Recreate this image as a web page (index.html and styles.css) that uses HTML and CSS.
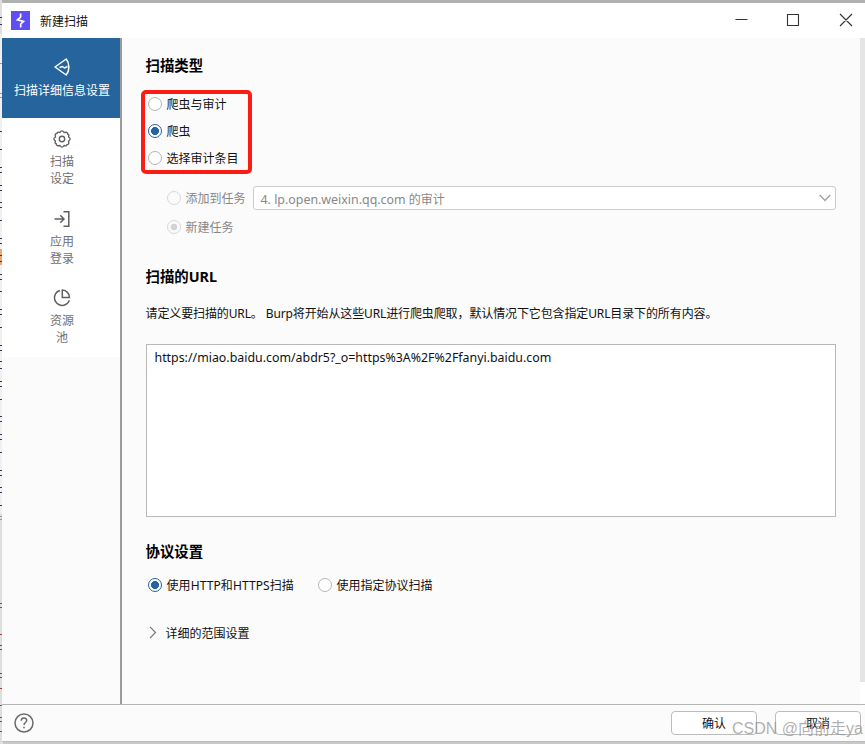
FILE: index.html
```html
<!DOCTYPE html>
<html lang="zh-CN">
<head>
<meta charset="utf-8">
<title>新建扫描</title>
<link rel="stylesheet" href="styles.css">
</head>
<body>
<div class="desktop">
  <svg class="edge" width="3" height="744" viewBox="0 0 3 744" aria-hidden="true">
    <path fill="#dedede" d="M0 0h3v744H0z"/>
    <path fill="#f0f0f0" d="M0 34h2v480H0z"/>
    <path fill="#eda877" d="M0 249h3v16H0z"/>
    <path stroke="#999" d="M0 63.5h3M0 93.5h3M0 97.5h3M0 516.5h3M0 519.5h3"/>
    <path stroke="#283b5c" d="M0 17.5h2M0 24.5h2M0 131.5h3M0 149.5h3M0 167.5h3M0 172.5h3M0 185.5h3M0 190.5h3M0 202.5h3M0 207.5h3M0 220.5h3M0 238.5h3M0 243.5h3M0 255.5h2M0 261.5h2M0 274.5h3M0 279.5h3M0 291.5h3M0 309.5h3M0 314.5h3M0 327.5h3M0 345.5h3M0 350.5h3M0 361.5h3M0 368.5h3M0 381.5h3M0 386.5h3M0 399.5h3M0 416.5h3M0 421.5h3M0 434.5h3M0 439.5h3M0 452.5h3M0 470.5h3M0 475.5h3M0 487.5h3M0 492.5h3M0 505.5h3"/>
    <path stroke="#b33a3a" d="M0 603.5h2M0 607.5h2M0 634.5h2M0 688.5h2M0 705.5h2M0 717.5h2M0 721.5h2M0 731.5h2"/>
    <path stroke="#4747b8" d="M0 645.5h2M0 649.5h2M0 673.5h2M0 677.5h2"/>
  </svg>
  <div class="window">
    <header class="titlebar">
      <svg class="logo" width="19" height="19" viewBox="0 0 19 19"><path fill="#5f4df5" d="M0 0h19v19H0z"/><path fill="none" stroke="#fff" stroke-width="1.700" d="M9.600 2.500V6.200L6.500 8.800 12.500 10.400 9.700 13V16.500"/></svg>
      <span class="title">新建扫描</span>
      <svg class="controls" width="118" height="14" viewBox="0 0 118 14" fill="none" stroke="#333" stroke-width="1.1"><path d="M.5 6.500h12M52.500 1.500h11v11h-11zM105 1l12 12M117 1l-12 12"/></svg>
    </header>
    <div class="body">
      <nav class="sidebar">
        <div class="tab active">
          <svg width="18" height="20" viewBox="0 0 18 20" fill="none" stroke="#fff" stroke-width="1.5" stroke-linejoin="round"><path d="M2 10 13.200 2C16.800 6.500 16.800 13.500 13.200 18z"/><path d="M6.500 10.500 9.500 9.500 11.500 11 14.500 9.500"/></svg>
          <span>扫描详细信息设置</span>
        </div>
        <div class="tab">
          <svg width="18" height="18" viewBox="0 0 18 18" fill="none" stroke="#606060" stroke-width="1.4" stroke-linejoin="round"><circle cx="9" cy="9" r="2.700"/><path d="M7 2.500Q9-.8 11 2.500Q14.600 1.400 14.800 4.200Q16.600 4.500 15.500 7Q18.800 9 15.500 11Q16.600 14.600 13.800 14.800Q13.500 16.600 11 15.500Q9 18.800 7 15.500Q3.400 16.600 3.200 13.800Q1.400 13.500 2.500 11Q-.8 9 2.500 7Q1.400 3.400 4.200 3.200Q4.500 1.400 7 2.500Z"/></svg>
          <span>扫描<br>设定</span>
        </div>
        <div class="tab">
          <svg width="18" height="18" viewBox="0 0 18 18" fill="none" stroke="#606060" stroke-width="1.5"><path d="M1.500 9h9.500M7.300 5.200 11 9l-3.700 3.800M10.500 1.700h5.300v14.600h-5.300"/></svg>
          <span>应用<br>登录</span>
        </div>
        <div class="tab">
          <svg width="18" height="18" viewBox="0 0 18 18" fill="none" stroke="#606060" stroke-width="1.500"><path d="M7 1.500A7.600 7.600 0 1 0 16.300 11.300M9.300 1.100V8.600h7.200A7.400 7.400 0 0 0 9.300 1.100z"/></svg>
          <span>资源<br>池</span>
        </div>
      </nav>
      <main class="content">
        <h2>扫描类型</h2>
        <div class="scan-types">
          <div class="option"><i class="radio"></i><span>爬虫与审计</span></div>
          <div class="option"><i class="radio on"></i><span>爬虫</span></div>
          <div class="option"><i class="radio"></i><span>选择审计条目</span></div>
        </div>
        <div class="task disabled">
          <i class="radio"></i><span>添加到任务</span>
          <div class="select"><span><span class="host">4. lp.open.weixin.qq.com</span> 的审计</span>
            <svg width="12" height="8" viewBox="0 0 12 8" fill="none" stroke="#a2a2a2" stroke-width="1.300"><path d="M.7 1 6 6.500 11.300 1"/></svg>
          </div>
        </div>
        <div class="task disabled"><i class="radio on"></i><span>新建任务</span></div>
        <h2 class="url-heading">扫描的URL</h2>
        <p class="hint">请定义要扫描的URL。 Burp将开始从这些URL进行爬虫爬取，默认情况下它包含指定URL目录下的所有内容。</p>
        <div class="urls"><span>https://miao.baidu.com/abdr5?_o=https%3A%2F%2Ffanyi.baidu.com</span></div>
        <h2 class="protocol-heading">协议设置</h2>
        <div class="protocols">
          <div class="option first"><i class="radio on"></i><span>使用HTTP和HTTPS扫描</span></div>
          <div class="option"><i class="radio"></i><span>使用指定协议扫描</span></div>
        </div>
        <div class="details"><svg width="8" height="13" viewBox="0 0 8 13" fill="none" stroke="#777" stroke-width="1.200"><path d="M1 .8 6.500 6.500 1 12.200"/></svg><span>详细的范围设置</span></div>
      </main>
      <div class="scroll"><div class="thumb"></div></div>
    </div>
    <footer class="footer">
      <svg width="20" height="20" viewBox="0 0 20 20" fill="none" stroke="#6b6b6b" stroke-width="1.500"><circle cx="10" cy="10" r="9"/><path d="M7.300 7.700C7.300 4.200 12.800 4.300 12.700 7.500 12.600 9.500 10 9.500 10 12M10 13.700v1.500"/></svg>
      <div class="button">确认</div>
      <div class="button">取消</div>
      <span class="watermark">CSDN @向前走ya</span>
    </footer>
  </div>
</div>
</body>
</html>
```
FILE: styles.css
```css
*, *::before, *::after { box-sizing: border-box; }
body {
  margin: 0;
  width: 865px;
  height: 744px;
  overflow: hidden;
  background: #c9c9c9;
  color: #111;
  font: 12px/17px "Noto Sans", "Noto Sans CJK SC", sans-serif;
}
.desktop { display: flex; height: 744px; }
.edge { display: block; flex: none; margin-right: -1px; }
.window {
  position: relative;
  flex: 1;
  min-width: 0;
  height: 742px;
  border-top: 3px solid #b0b2b0;
  border-bottom: 1px solid #bcbcbc;
  background: #fbfbfb;
  display: flex;
  flex-direction: column;
}
.titlebar {
  height: 35px;
  flex: none;
  background: #fff;
  display: flex;
  align-items: center;
  padding: 0 12px 0 9px;
}
.title { margin-left: 10px; padding-top: 1px; }
.controls { margin: -1px 0 0 auto; }
.body { display: flex; height: 666px; flex: none; }
.sidebar { width: 120px; flex: none; border-right: 2px solid #9b9b9b; }
.tab {
  height: 79.5px;
  padding: 12px 0 0 2px;
  background: #fff;
  color: #707070;
  display: flex;
  flex-direction: column;
  align-items: center;
  text-align: center;
}
.tab span { margin-top: 5px; }
.tab.active { height: 80px; padding-top: 19px; background: #26649e; color: #fff; }
.tab.active span { margin-top: 5px; white-space: nowrap; }
.content { flex: 1; min-width: 0; padding: 16px 24px 0 23.5px; }
h2 { margin: 0; font-size: 14.4px; line-height: 24px; font-weight: 700; color: #000; }
.scan-types { position: relative; width: 110px; margin: 12px 0 0 2px; }
.scan-types::after {
  content: "";
  position: absolute;
  left: -7px;
  top: 0;
  width: 111px;
  height: 84px;
  border: 4px solid #fb1c14;
  border-radius: 5px;
}
.option { display: flex; align-items: center; height: 27px; white-space: nowrap; }
.option span { padding-top: 2px; }
.radio {
  flex: none;
  width: 14px;
  height: 14px;
  margin-right: 5px;
  border: 1px solid #b5b5b5;
  border-radius: 50%;
  background: #fff;
}
.radio.on {
  border: 1.5px solid #26649e;
  background: radial-gradient(circle, #26649e 3.7px, #fff 4.3px);
}
.disabled { color: #888; }
.disabled .radio { border: 1px solid #d8d8d8; background: #fbfbfb; }
.disabled .radio.on { background: radial-gradient(circle, #d4d4d4 3px, #fbfbfb 3.700px); }
.task { display: flex; align-items: center; height: 24px; margin: 15px 0 0 21px; white-space: nowrap; }
.task > span { padding-top: 1px; }
.task + .task { margin-top: 5px; }
.select {
  flex: 1;
  height: 24px;
  margin-left: 7px;
  padding: 0 4px 0 7px;
  border: 1px solid #cbcbcb;
  border-radius: 3px;
  background: #fff;
  display: flex;
  align-items: center;
  justify-content: space-between;
}
.select > span { padding-top: 2px; }
.host { font-size: 12.4px; }
.url-heading { margin-top: 26px; }
.hint { margin: 16px 0 0; white-space: nowrap; letter-spacing: -.12px; }
.urls {
  height: 173px;
  margin-top: 22px;
  padding: 4px 8px;
  border: 1px solid #b8b8b8;
  background: #fff;
  font-size: 12.38px;
}
.protocol-heading { margin-top: 23px; }
.protocols { display: flex; margin: 7px 0 0 2px; }
.option.first { width: 170px; }
.option.first span { letter-spacing: .1px; }
.details { display: flex; align-items: center; margin: 22px 0 0 3px; height: 24px; }
.details span { margin-left: 9px; padding-top: 3px; }
.scroll { width: 5px; flex: none; background: #fff; }
.thumb { height: 644px; background: #e5e5e5; }
.footer {
  position: relative;
  flex: 1;
  border-top: 1px solid #b5b5b5;
  display: flex;
  align-items: center;
  padding: 0 4px 0 12px;
}
.button {
  width: 86px;
  height: 24px;
  margin-left: 18px;
  border: 1px solid #bcbcbc;
  border-radius: 4px;
  background: #fff;
  line-height: 24px;
  text-align: center;
}
.footer svg + .button { margin-left: auto; }
.watermark {
  position: absolute;
  left: 730px;
  top: 12px;
  font: 16px/24px "Liberation Sans", "Noto Sans CJK SC", sans-serif;
  color: rgba(150, 150, 150, .75);
  white-space: nowrap;
}
```
